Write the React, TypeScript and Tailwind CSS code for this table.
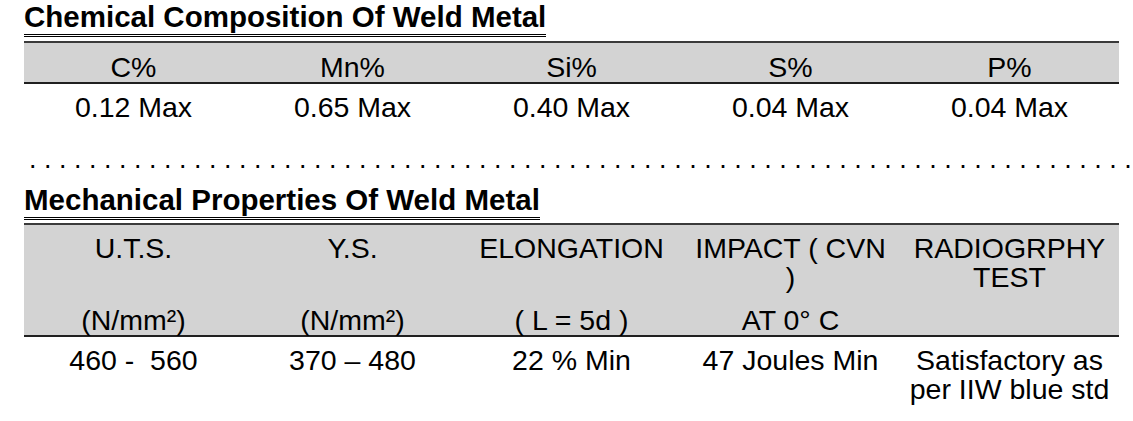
import React from "react";

const chem = [
  { head: "C%", value: "0.12 Max" },
  { head: "Mn%", value: "0.65 Max" },
  { head: "Si%", value: "0.40 Max" },
  { head: "S%", value: "0.04 Max" },
  { head: "P%", value: "0.04 Max" },
];

type Mech = { head: React.ReactNode; unit: string; value: React.ReactNode };

const mech: Mech[] = [
  { head: "U.T.S.", unit: "(N/mm²)", value: "460 -\u00a0 560" },
  { head: "Y.S.", unit: "(N/mm²)", value: "370 – 480" },
  { head: "ELONGATION", unit: "( L = 5d )", value: "22 % Min" },
  {
    head: (
      <>
        IMPACT ( CVN
        <br />)
      </>
    ),
    unit: "AT 0° C",
    value: "47 Joules Min",
  },
  {
    head: (
      <>
        RADIOGRPHY
        <br />
        TEST
      </>
    ),
    unit: "",
    value: (
      <>
        Satisfactory as
        <br />
        per IIW blue std
      </>
    ),
  },
];

function Title({ children }: { children: React.ReactNode }) {
  return (
    <div>
      <h2 className="inline-block text-[29.5px] font-bold leading-[32px] pb-[1px] border-b-[3px] border-double border-black">
        {children}
      </h2>
    </div>
  );
}

export default function App() {
  return (
    <div className="w-[1133px] h-[421px] bg-white overflow-hidden text-black font-['Liberation_Sans',Arial,sans-serif]">
      <div className="pl-6 pr-[14px] pt-[1px]">
        <Title>Chemical Composition Of Weld Metal</Title>

        {/* chemical table */}
        <div className="mt-[4px]">
          <div className="grid grid-cols-5 bg-[#d3d3d3] border-t-2 border-b-2 border-t-[#3a3a3a] border-b-[#202020]">
            {chem.map((c) => (
              <div
                key={c.head}
                className="text-center text-[28.5px] leading-[29px] pt-[10px]"
              >
                {c.head}
              </div>
            ))}
          </div>
          <div className="grid grid-cols-5">
            {chem.map((c) => (
              <div
                key={c.head}
                className="text-center text-[28.5px] leading-[29px] pt-[9px]"
              >
                {c.value}
              </div>
            ))}
          </div>
        </div>

        {/* dotted separator */}
        <div className="mt-[23px] -mr-[14px] pl-[5px] text-[27px] leading-[28px] whitespace-pre">
          {". ".repeat(74).trimEnd()}
        </div>

        <div className="mt-[11px]">
          <Title>Mechanical Properties Of Weld Metal</Title>
        </div>

        {/* mechanical table */}
        <div className="mt-[3px]">
          <div className="grid grid-cols-5 bg-[#d3d3d3] border-t-2 border-b-2 border-t-[#3a3a3a] border-b-[#202020] pt-[9px]">
            {mech.map((m, i) => (
              <div
                key={i}
                className="flex flex-col text-center text-[28.5px] leading-[29px]"
              >
                <div className="h-[58px]">{m.head}</div>
                <div className="mt-[14px] h-[29px]">{m.unit}</div>
              </div>
            ))}
          </div>
          <div className="grid grid-cols-5">
            {mech.map((m, i) => (
              <div
                key={i}
                className="text-center text-[28.5px] leading-[29px] pt-[9px]"
              >
                {m.value}
              </div>
            ))}
          </div>
        </div>
      </div>
    </div>
  );
}
